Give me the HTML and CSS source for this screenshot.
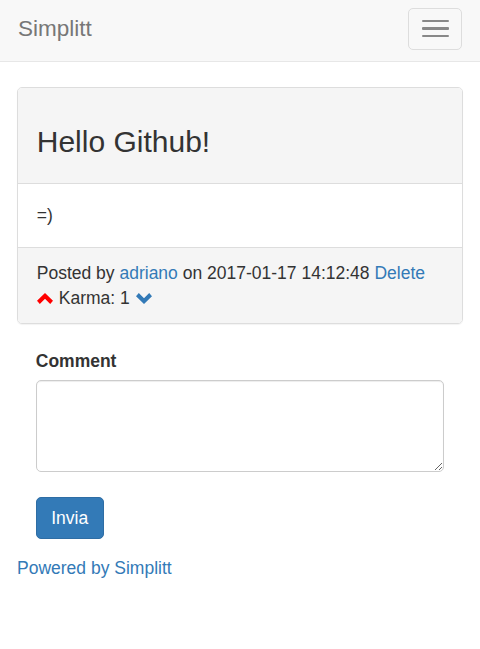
FILE: index.html
```html
<!DOCTYPE html>
<html lang="it">
<head>
<meta charset="utf-8">
<title>Simplitt</title>
<link rel="stylesheet" href="styles.css">
</head>
<body>
<nav class="navbar">
  <a class="brand" href="#">Simplitt</a>
  <button class="toggle" type="button" aria-label="Toggle navigation">
    <span class="bar"></span>
    <span class="bar"></span>
    <span class="bar"></span>
  </button>
</nav>
<div class="container">
  <div class="panel">
    <div class="panel-heading">
      <h3 class="post-title">Hello Github!</h3>
    </div>
    <div class="panel-body">=)</div>
    <div class="panel-footer">
      <div>Posted by <a href="#">adriano</a> on 2017-01-17 14:12:48 <a href="#">Delete</a></div>
      <div class="karma">
        <svg class="chev chev-up" viewBox="0 0 16 11" width="16" height="11" aria-hidden="true"><path d="M8 0 L16 7.8 L13.2 11 L8 5.8 L2.8 11 L0 7.8 Z"/></svg>
        <span>Karma: 1</span>
        <svg class="chev chev-down" viewBox="0 0 16 11" width="16" height="11" aria-hidden="true"><path d="M8 11 L16 3.2 L13.2 0 L8 5.2 L2.8 0 L0 3.2 Z"/></svg>
      </div>
    </div>
  </div>
  <form class="comment-form">
    <div class="form-group">
      <label class="form-label" for="comment">Comment</label>
      <textarea id="comment" class="form-control" rows="3"></textarea>
    </div>
    <button type="button" class="btn-primary">Invia</button>
  </form>
  <a class="powered" href="#">Powered by Simplitt</a>
</div>
</body>
</html>
```
FILE: styles.css
```css
* { box-sizing: border-box; }
html, body { margin: 0; padding: 0; }
body {
  font-family: "Liberation Sans", Arial, Helvetica, sans-serif;
  font-size: 17.5px;
  line-height: 25px;
  color: #333;
  background: #fff;
}
a { color: #337ab7; text-decoration: none; }

.navbar {
  display: flex;
  justify-content: space-between;
  align-items: flex-start;
  height: 62px;
  background: #f8f8f8;
  border-bottom: 1px solid #e7e7e7;
}
.brand {
  color: #777;
  font-size: 22.5px;
  line-height: 25px;
  padding: 16px 18px 0;
}
.toggle {
  margin: 7.5px 18px 0 0;
  width: 54px;
  height: 42px;
  padding: 0 12.5px;
  background: transparent;
  border: 1px solid #ddd;
  border-radius: 5px;
  display: flex;
  flex-direction: column;
  justify-content: center;
  gap: 5px;
}
.bar {
  display: block;
  width: 27.5px;
  height: 2.5px;
  background: #888;
  border-radius: 1px;
}

.container { padding: 0 17px; }

.panel {
  margin-top: 25px;
  margin-bottom: 25px;
  border: 1px solid #ddd;
  border-radius: 5px;
  box-shadow: 0 1px 1px rgba(0,0,0,.05);
  overflow: hidden;
}
.panel-heading {
  background: #f5f5f5;
  padding: 12.5px 18.75px 12px;
  border-bottom: 1px solid #ddd;
}
.post-title {
  margin: 24.5px 0 12.5px;
  font-size: 30px;
  line-height: 33px;
  font-weight: 500;
  color: #333;
}
.panel-body { padding: 19px 18.75px 19.25px; }
.panel-footer {
  background: #f5f5f5;
  border-top: 1px solid #ddd;
  padding: 13.5px 18.75px 11.5px;
}
.karma { display: flex; align-items: center; gap: 6px; }
.chev { display: block; margin-top: -1px; }
.chev-up { fill: #ff0000; }
.chev-down { fill: #337ab7; }

.comment-form { padding: 0 18.75px; }
.form-group { margin-bottom: 25px; }
.form-label {
  display: block;
  font-weight: bold;
  margin-bottom: 6.25px;
}
.form-control {
  display: block;
  width: 100%;
  height: 92px;
  padding: 7.5px 15px;
  font: inherit;
  color: #555;
  border: 1px solid #ccc;
  border-radius: 5px;
  box-shadow: inset 0 1px 1px rgba(0,0,0,.075);
  background: #fff;
}
.btn-primary {
  display: block;
  font: inherit;
  color: #fff;
  background: #337ab7;
  border: 1px solid #2e6da4;
  border-radius: 5px;
  padding: 7.5px 14.5px;
  line-height: 25px;
}
.powered { display: inline-block; margin-top: 17px; }
```
